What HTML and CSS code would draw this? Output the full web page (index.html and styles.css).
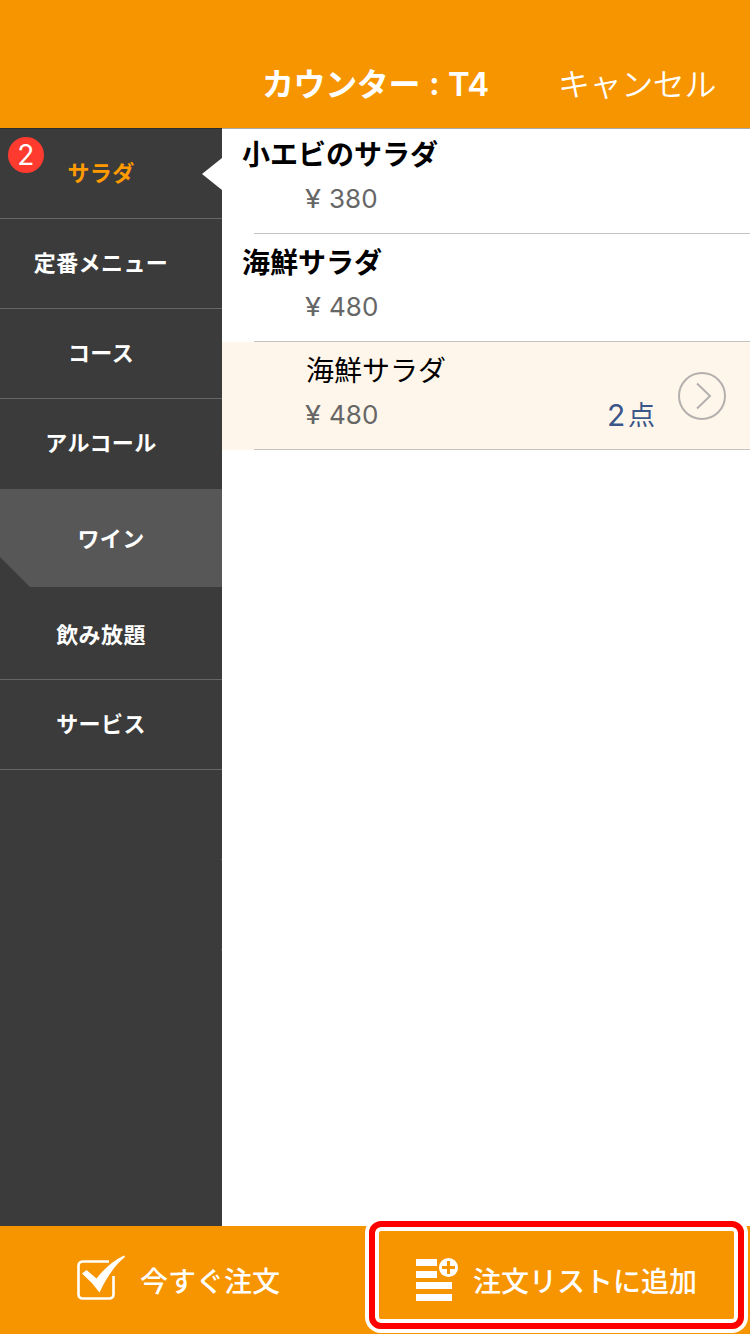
FILE: index.html
```html
<!DOCTYPE html>
<html lang="ja">
<head>
<meta charset="utf-8">
<title>カウンター : T4</title>
<link rel="stylesheet" href="styles.css">
</head>
<body>
<div class="app">
  <header class="header">
    <h1 class="title"><span>カウンター</span><span class="title-sep">:</span><span class="title-table">T4</span></h1>
    <span class="cancel">キャンセル</span>
  </header>
  <div class="main">
    <nav class="sidebar">
      <div class="cat cat-active">サラダ<span class="badge">2</span>
        <svg class="notch" width="20" height="32" viewBox="0 0 20 32"><path d="M20 0L0 16L20 32Z" fill="#fff"/></svg>
      </div>
      <div class="cat">定番メニュー</div>
      <div class="cat">コース</div>
      <div class="cat cat-last">アルコール</div>
      <div class="cat-group">ワイン</div>
      <div class="cat cat-after">飲み放題</div>
      <div class="cat">サービス</div>
      <div class="cat-empty"></div>
      <div class="cat-empty"></div>
    </nav>
    <section class="list">
      <div class="item">
        <div class="name">小エビのサラダ</div>
        <div class="price"><span class="yen">¥</span>380</div>
      </div>
      <div class="item">
        <div class="name">海鮮サラダ</div>
        <div class="price"><span class="yen">¥</span>480</div>
      </div>
      <div class="item item-ordered">
        <div class="item-text">
          <div class="name name-sub">海鮮サラダ</div>
          <div class="price"><span class="yen">¥</span>480</div>
        </div>
        <div class="count"><span class="count-num">2</span>点</div>
        <svg class="chevron" width="48" height="48" viewBox="0 0 48 48" fill="none" stroke="#b3b0ad" stroke-width="2"><circle cx="24" cy="24" r="23"/><path d="M19 11.500L32 24L19 36.500"/></svg>
      </div>
    </section>
  </div>
  <footer class="footer">
    <div class="action">
      <svg class="check-icon" width="50" height="48" viewBox="0 0 50 48"><path d="M33 6.500H7Q2.500 6.500 2.500 11V39Q2.500 43.500 7 43.500H33Q37.500 43.500 37.500 39V21" fill="none" stroke="#fff" stroke-width="2.600"/><path d="M6 18.500L10.500 15L20.500 23.500Q32.500 8 48 0.500L49 2Q35 13 23.500 37.500Q16 27 6 18.500Z" fill="#fff"/></svg>
      <span>今すぐ注文</span>
    </div>
    <div class="action action-list">
      <svg class="list-icon" width="42" height="44" viewBox="0 0 42 44"><g fill="#fff"><path d="M0 2H21V9H0ZM0 14H21V21H0ZM0 25H36V32H0ZM0 37H36V44H0Z"/><circle cx="32.500" cy="10.500" r="9.500"/></g><path d="M32.500 4V17M26 10.500H39" stroke="#f79500" stroke-width="3"/></svg>
      <span>注文リストに追加</span>
      <div class="highlight"></div>
    </div>
  </footer>
</div>
</body>
</html>
```
FILE: styles.css
```css
* { box-sizing: border-box; }
body { margin: 0; }
.app {
  width: 750px;
  height: 1334px;
  display: flex;
  flex-direction: column;
  overflow: hidden;
  background: #fff;
  font-family: "Noto Sans CJK JP", sans-serif;
}
.header {
  height: 128px;
  flex: none;
  display: flex;
  padding: 59px 0 0 262px;
  background: #f79500;
  color: #fff;
  line-height: 46px;
  white-space: nowrap;
}
.title {
  width: 296px;
  margin: 0;
  display: flex;
  font-size: 32px;
  font-weight: 700;
  letter-spacing: -0.4px;
}
.title-sep { width: 28px; padding: 2px 0 0 9px; font-family: Inter, sans-serif; }
.title-table { padding-top: 2px; font-family: Inter, sans-serif; font-weight: 600; font-size: 33px; }
.cancel { font-size: 32px; font-weight: 350; letter-spacing: -0.4px; }
.main { flex: 1; display: flex; }
.sidebar {
  width: 222px;
  background: #3b3b3b;
  border-top: 1px solid #2b2b2b;
  color: #fff;
  font-size: 22px;
  font-weight: 700;
  letter-spacing: 0.4px;
}
.cat {
  position: relative;
  height: 90px;
  display: flex;
  align-items: center;
  justify-content: center;
  padding: 0 20px 5px 0;
  border-bottom: 1px solid #666;
}
.cat-active { color: #ff9a00; }
.cat-last { border-color: #3b3b3b; }
.cat-after { height: 93px; padding-bottom: 1px; }
.cat-group {
  height: 98px;
  display: flex;
  align-items: center;
  justify-content: center;
  padding-bottom: 2px;
  background: #575757;
  clip-path: polygon(0 0, 100% 0, 100% 100%, 30px 100%, 0 68px);
}
.badge {
  position: absolute;
  left: 8px;
  top: 8px;
  width: 36px;
  height: 36px;
  border-radius: 50%;
  background: #ff3b30;
  color: #fff;
  font: 400 28px/37px Inter, sans-serif;
  text-align: center;
}
.notch { position: absolute; right: 0; top: 29px; }
.cat-empty {
  height: 90px;
  width: 1px;
  margin-left: 221px;
  border-bottom: 1px solid #666;
}
.list { flex: 1; border-top: 1px solid #a9a9a9; }
.item {
  height: 108px;
  padding: 5px 0 0 20px;
  background: linear-gradient(#c4c3c1, #c4c3c1) 32px 100% / 100% 1px no-repeat;
}
.item:first-child { height: 105px; padding-top: 2px; }
.item-ordered {
  display: flex;
  background-color: #fff6eb;
}
.item-text { width: 365px; }
.name {
  height: 46px;
  font-size: 28px;
  line-height: 44px;
  font-weight: 700;
}
.name-sub { padding-left: 64px; font-weight: 400; }
.price {
  display: flex;
  padding-left: 63px;
  height: 44px;
  line-height: 44px;
  font-family: Inter, sans-serif;
  font-size: 26px;
  font-weight: 400;
  color: #666;
}
.yen { width: 24px; transform: scaleX(1.12); transform-origin: 0 50%; }
.count {
  width: 71px;
  padding-top: 45px;
  display: flex;
  font-size: 27px;
  line-height: 44px;
  color: #3b5689;
}
.count-num { width: 21px; padding-top: 1px; font-family: Inter, sans-serif; font-size: 30px; font-weight: 400; }
.chevron { margin-top: 25px; }
.footer {
  height: 108px;
  flex: none;
  display: flex;
  background: #f79500;
  color: #fff;
  font-size: 28px;
  font-weight: 500;
}
.action {
  position: relative;
  width: 375px;
  display: flex;
  padding-left: 76px;
  line-height: 108px;
  white-space: nowrap;
}
.action-list { padding-left: 41px; }
.check-icon { margin: 29px 14px 0 0; }
.list-icon { margin: 31px 15px 0 0; }
.highlight {
  position: absolute;
  left: -6px;
  top: -5px;
  width: 375px;
  height: 108px;
  border: 6px solid #f00;
  border-radius: 12px;
  box-shadow: 0 0 0 4px #fff, inset 0 0 0 4px #fff;
}
```
